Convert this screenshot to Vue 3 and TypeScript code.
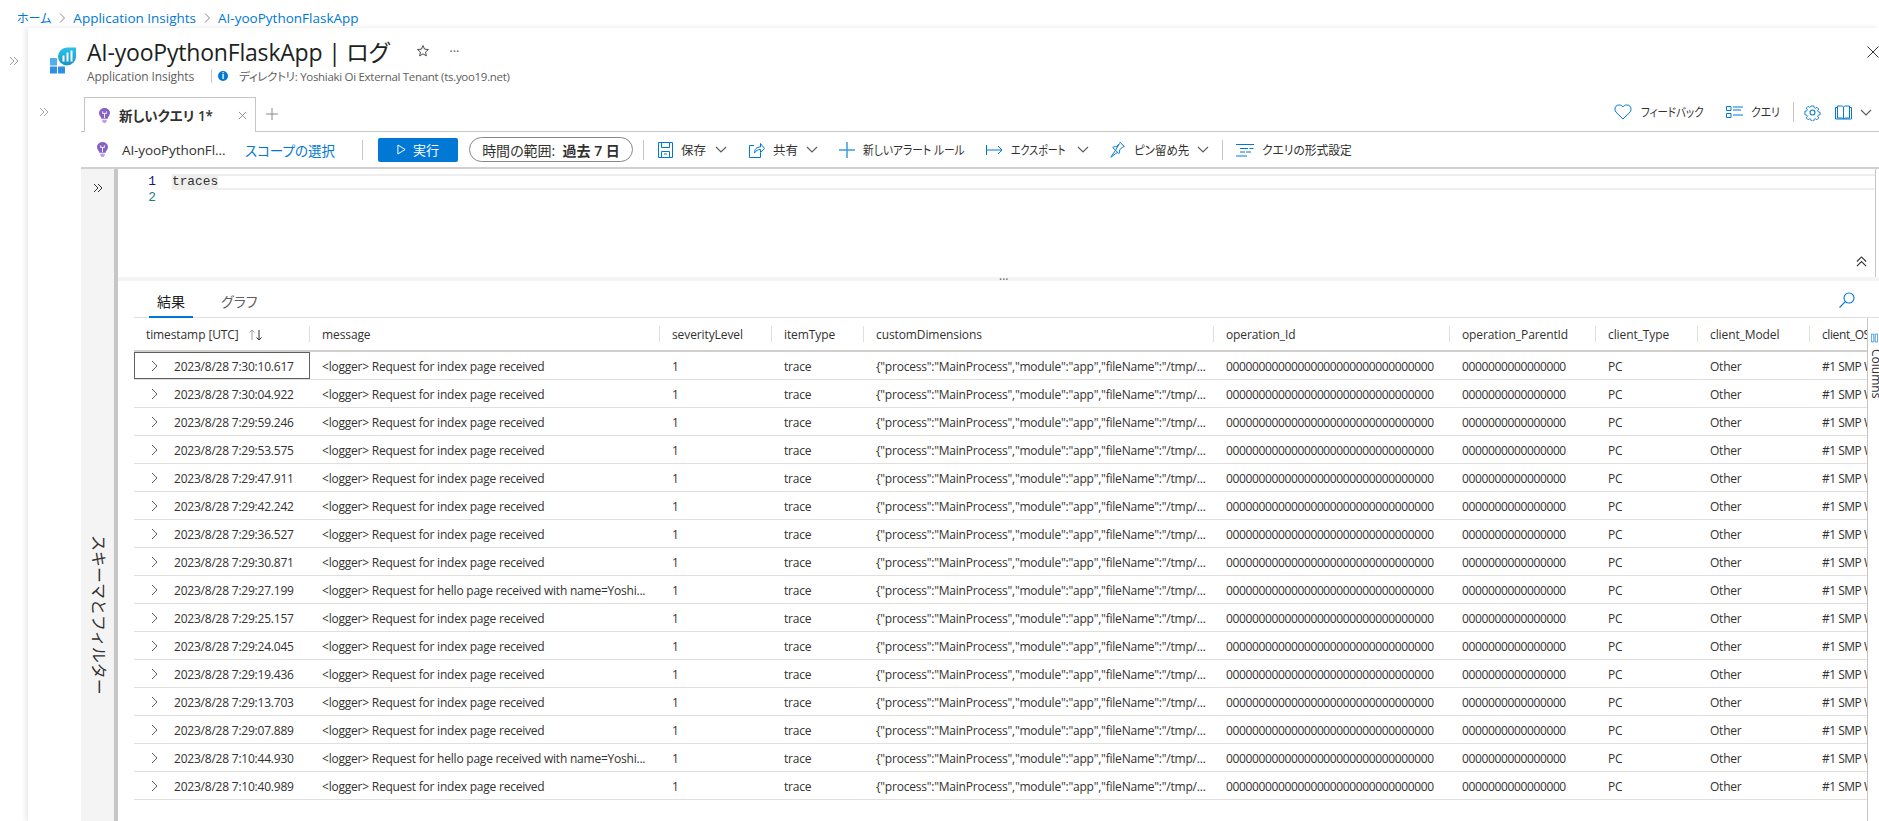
<script setup lang="ts">
const columns = [
  { key: 'timestamp', width: 176 },
  { key: 'message', width: 350 },
  { key: 'severityLevel', width: 112 },
  { key: 'itemType', width: 92 },
  { key: 'customDimensions', width: 350 },
  { key: 'operation_Id', width: 236 },
  { key: 'operation_ParentId', width: 146 },
  { key: 'client_Type', width: 102 },
  { key: 'client_Model', width: 112 },
  { key: 'client_OS', width: 60 }
]
const hello = '<logger> Request for hello page received with name=Yoshi...'
const index = '<logger> Request for index page received'
const rows: [string, string][] = [
  ['2023/8/28 7:30:10.617', index],
  ['2023/8/28 7:30:04.922', index],
  ['2023/8/28 7:29:59.246', index],
  ['2023/8/28 7:29:53.575', index],
  ['2023/8/28 7:29:47.911', index],
  ['2023/8/28 7:29:42.242', index],
  ['2023/8/28 7:29:36.527', index],
  ['2023/8/28 7:29:30.871', index],
  ['2023/8/28 7:29:27.199', hello],
  ['2023/8/28 7:29:25.157', index],
  ['2023/8/28 7:29:24.045', index],
  ['2023/8/28 7:29:19.436', index],
  ['2023/8/28 7:29:13.703', index],
  ['2023/8/28 7:29:07.889', index],
  ['2023/8/28 7:10:44.930', hello],
  ['2023/8/28 7:10:40.989', index]
]
const dims = '{"process":"MainProcess","module":"app","fileName":"/tmp/...'
const zeros = '00000000000000000000000000000000'
</script>

<template>
  <div class="page">
    <nav class="crumbs">
      <a class="home">ホーム</a>
      <svg class="crumb-sep" viewBox="0 0 8 12"><path d="M2 1.5 6.5 6 2 10.5" /></svg>
      <a>Application Insights</a>
      <svg class="crumb-sep" viewBox="0 0 8 12"><path d="M2 1.5 6.5 6 2 10.5" /></svg>
      <a>AI-yooPythonFlaskApp</a>
    </nav>
    <div class="shell">
      <aside class="rail">
        <svg class="dbl" viewBox="0 0 12 12"><path d="M2 2l4 4-4 4M6 2l4 4-4 4" /></svg>
      </aside>
      <main class="blade">
        <header class="blade-head">
          <svg class="logo" viewBox="0 0 26 27">
            <defs>
              <linearGradient id="lg-bubble" x1="0" y1="0" x2="0" y2="1"><stop offset="0" stop-color="#29c3e6" /><stop offset="1" stop-color="#1b93c9" /></linearGradient>
            </defs>
            <path d="M17 .5h9v9a9 9 0 0 1-18 0 9 9 0 0 1 9-9z" fill="url(#lg-bubble)" />
            <path d="M13 9h2v6h-2zM17 6h2v9h-2zM21 4h2v11h-2z" fill="#fff" transform="translate(-.5 -.5)" />
            <rect x="0" y="11" width="7" height="7.500" rx=".6" fill="#50aef0" />
            <rect x="0" y="19.500" width="7" height="7" rx=".6" fill="#2f8fe6" />
            <rect x="8" y="19.500" width="7" height="7" rx=".6" fill="#2f8fe6" />
          </svg>
          <div class="titles">
            <div class="title-row">
              <h1>AI-yooPythonFlaskApp | <span class="h-jp">ログ</span></h1>
              <svg class="star" viewBox="0 0 16 16"><path d="M8 1.800l1.800 4.100 4.400.4-3.300 2.900 1 4.300L8 11.300l-3.900 2.200 1-4.300-3.300-2.900 4.400-.4z" /></svg>
              <span class="more">···</span>
            </div>
            <div class="sub-row">
              <span class="sub-name">Application Insights</span>
              <span class="sub-bar"></span>
              <span class="info">i</span>
              <span>ディレクトリ: Yoshiaki Oi External Tenant (ts.yoo19.net)</span>
            </div>
          </div>
          <svg class="close" viewBox="0 0 12 12"><path d="M0.500 0.500 11.500 11.500M11.500 0.500 0.500 11.500" /></svg>
        </header>

        <div class="workspace">
          <aside class="rail2">
            <svg class="dbl" viewBox="0 0 12 12"><path d="M2 2l4 4-4 4M6 2l4 4-4 4" /></svg>
          </aside>
          <section class="content">
            <div class="tabbar">
              <div class="tab">
                <svg class="bulb" viewBox="0 0 12 18" preserveAspectRatio="none"><path d="M6 0a6 6 0 0 1 6 6c0 2.400-1.400 3.500-2.200 5.400-.2.500-.2 1-.3 1.600h-7c-.1-.6-.1-1.100-.3-1.600C1.400 9.500 0 8.400 0 6a6 6 0 0 1 6-6z" fill="#8661c5" /><path d="M3.500 14h5v1.500L7 18H5l-1.500-2.500z" fill="#b9a0e8" /><path d="M3.700 6.500h4.600M6 6.500V12M4 4v2.500M8 4v2.500" stroke="#fff" stroke-width="1" fill="none" /></svg>
                <span class="tab-name">新しいクエリ 1*</span>
                <svg class="tab-x" viewBox="0 0 10 10"><path d="M1 1l8 8M9 1l-8 8" /></svg>
              </div>
              <svg class="tab-plus" viewBox="0 0 12 12"><path d="M6 0v12M0 6h12" /></svg>
              <div class="spacer"></div>
              <div class="top-actions">
                <svg class="ic heart" viewBox="0 0 18 16"><path d="M9 15 2 8.200A4.300 4.300 0 0 1 1 5.200 4.300 4.300 0 0 1 5.300 1C6.900 1 8.200 1.800 9 3c.8-1.200 2.100-2 3.700-2A4.300 4.300 0 0 1 17 5.200c0 1.200-.4 2.200-1 3z" /></svg>
                <span class="ta-l1 cond">フィードバック</span>
                <svg class="ic qlist" viewBox="0 0 17 14"><path d="M.5 1.500h4.500v4H.5zM.5 8.500h4.500v4H.5zM7 2h10M7 5h8M7 10h10" /></svg>
                <span class="ta-l2 cond">クエリ</span>
                <span class="vsep tall"></span>
                <svg class="ic gear" viewBox="0 0 16 16"><circle cx="8" cy="8" r="2.300" /><path d="M6.600 .7h2.800l.4 2 1.400.6 1.700-1.100 2 2-1.100 1.700.6 1.400 2 .4v2.800l-2 .4-.6 1.400 1.100 1.700-2 2-1.700-1.100-1.400.6-.4 2H6.600l-.4-2-1.400-.6-1.700 1.100-2-2 1.100-1.700-.6-1.400-2-.4V6.600l2-.4.6-1.400-1.100-1.700 2-2 1.700 1.100 1.400-.6z" transform="translate(1.200 1.200) scale(.85)" /></svg>
                <svg class="ic book" viewBox="0 0 17 15"><path d="M.5 2.500h2V13h5l1 1 1-1h5V2.500h2V14H.5zM2.500 1h4c1 0 2 .5 2 1.500V13M14.500 1h-4c-1 0-2 .5-2 1.500V13M14.500 1v12M2.500 1v12" /></svg>
                <svg class="chev" viewBox="0 0 12 7"><path d="M1 1l5 5 5-5" /></svg>
              </div>
            </div>

            <div class="toolbar">
              <svg class="bulb small" viewBox="0 0 12 18" preserveAspectRatio="none"><path d="M6 0a6 6 0 0 1 6 6c0 2.400-1.400 3.500-2.200 5.400-.2.500-.2 1-.3 1.600h-7c-.1-.6-.1-1.100-.3-1.600C1.400 9.500 0 8.400 0 6a6 6 0 0 1 6-6z" fill="#8661c5" /><path d="M3.500 14h5v1.500L7 18H5l-1.500-2.500z" fill="#b9a0e8" /><path d="M3.700 6.500h4.600M6 6.500V12M4 4v2.500M8 4v2.500" stroke="#fff" stroke-width="1" fill="none" /></svg>
              <span class="scope-name">AI-yooPythonFl...</span>
              <a class="scope-link">スコープの選択</a>
              <span class="vsep s1"></span>
              <button class="run">
                <svg viewBox="0 0 10 12"><path d="M1 1l8 5-8 5z" /></svg>
                <span>実行</span>
              </button>
              <div class="pill">時間の範囲:&nbsp;&nbsp;<b>過去 7 日</b></div>
              <span class="vsep s2"></span>
              <svg class="ic save" viewBox="0 0 15 16"><path d="M.5.500h14v15H.5zM3.500.500v5h8v-5M3.500 15.500v-6h8v6M6 12h3" /></svg>
              <span class="t t-save">保存</span>
              <svg class="chev c1" viewBox="0 0 12 7"><path d="M1 1l5 5 5-5" /></svg>
              <svg class="ic share" viewBox="0 0 16 16"><path d="M5 3.500H.500v12h11V11M5.500 11c0-4 2-6 6-6V1.500l4 5-4 4V7.500c-2.500 0-4.500 1-6 3.500z" /></svg>
              <span class="t t-share">共有</span>
              <svg class="chev c2" viewBox="0 0 12 7"><path d="M1 1l5 5 5-5" /></svg>
              <svg class="ic plus" viewBox="0 0 16 16"><path d="M8 0v16M0 8h16" /></svg>
              <span class="t t-alert cond">新しいアラート ルール</span>
              <svg class="ic arrow" viewBox="0 0 17 10"><path d="M.5 0v10M1 5h15M12 1l4 4-4 4" /></svg>
              <span class="t t-export cond">エクスポート</span>
              <svg class="chev c3" viewBox="0 0 12 7"><path d="M1 1l5 5 5-5" /></svg>
              <svg class="ic pin" viewBox="0 0 15 17"><path d="M9.500 .8l4.700 4.700-1.500 .4-3.200 3.200c.4 1.400.1 2.600-.7 3.500L5.500 9.300 .8 16.200l6.700-4.800M5.500 9.300 2.700 6.500c.9-.8 2.100-1.100 3.500-.7l3.200-3.200z" /></svg>
              <span class="t t-pin cond">ピン留め先</span>
              <svg class="chev c4" viewBox="0 0 12 7"><path d="M1 1l5 5 5-5" /></svg>
              <span class="vsep s3"></span>
              <svg class="ic fmt" viewBox="0 0 18 14"><path d="M0 1.500h18M4 5.500h8M13.500 5.500h4M4 9h5M10 9h5M0 13h11" /></svg>
              <span class="t t-fmt cond">クエリの形式設定</span>
            </div>

            <div class="split">
              <aside class="schema">
                <svg class="dbl strong" viewBox="0 0 12 12"><path d="M2 2l4 4-4 4M6 2l4 4-4 4" /></svg>
                <span class="schema-label">スキーマとフィルター</span>
              </aside>
              <div class="divider"></div>
              <div class="work">
                <div class="editor">
                  <div class="gutter">
                    <span class="ln active">1</span>
                    <span class="ln">2</span>
                  </div>
                  <div class="code">
                    <div class="line current"><span class="tok">traces</span></div>
                  </div>
                  <svg class="collapse" viewBox="0 0 12 12"><path d="M1 6l5-5 5 5M1 11l5-5 5 5" /></svg>
                </div>
                <div class="grip">
                  <span class="dots">···</span>
                </div>
                <div class="results">
                  <div class="res-tabs">
                    <span class="rt active">結果</span>
                    <span class="rt">グラフ</span>
                    <svg class="search" viewBox="0 0 16 16"><circle cx="10" cy="6" r="5" /><path d="M6.300 9.700.5 15.500" /></svg>
                  </div>
                  <div class="grid-wrap">
                    <div class="grid">
                      <div class="hdr">
                        <div v-for="c in columns" :key="c.key" class="hc" :style="{ width: c.width + 'px' }">
                          <span v-if="c.key === 'timestamp'">timestamp [UTC]</span>
                          <span v-else>{{ c.key }}</span>
                          <svg v-if="c.key === 'timestamp'" class="sort" viewBox="0 0 16 12"><path class="up" d="M4 11V1M1.500 3.500 4 1l2.500 2.500" /><path d="M11 1v10M8.500 8.500 11 11l2.500-2.500" /></svg>
                        </div>
                      </div>
                      <div v-for="(r, i) in rows" :key="i" class="row">
                        <div class="c first" :class="{ focus: i === 0 }" :style="{ width: columns[0].width + 'px' }">
                          <svg class="expand" viewBox="0 0 7 12"><path d="M1 1l5 5-5 5" /></svg>
                          <span>{{ r[0] }}</span>
                        </div>
                        <div class="c" :style="{ width: columns[1].width + 'px' }">{{ r[1] }}</div>
                        <div class="c" :style="{ width: columns[2].width + 'px' }">1</div>
                        <div class="c" :style="{ width: columns[3].width + 'px' }">trace</div>
                        <div class="c" :style="{ width: columns[4].width + 'px' }">{{ dims }}</div>
                        <div class="c num" :style="{ width: columns[5].width + 'px' }">{{ zeros }}</div>
                        <div class="c num" :style="{ width: columns[6].width + 'px' }">0000000000000000</div>
                        <div class="c" :style="{ width: columns[7].width + 'px' }">PC</div>
                        <div class="c" :style="{ width: columns[8].width + 'px' }">Other</div>
                        <div class="c" :style="{ width: columns[9].width + 'px' }">#1 SMP Wed</div>
                      </div>
                    </div>
                    <aside class="col-panel">
                      <svg viewBox="0 0 10 12"><path d="M.5.500h3.500v11H.5zM6 .500h3.500v11H6z" /></svg>
                      <span>Columns</span>
                    </aside>
                  </div>
                </div>
              </div>
            </div>
          </section>
        </div>
      </main>
    </div>
  </div>
</template>

<style>
html, body { margin: 0; padding: 0; background: #fff; overflow: hidden; }
</style>

<style scoped>
.page {
  width: 1879px; height: 821px; overflow: hidden; background: #fff; color: #323130;
  font-family: "Open Sans", "Noto Sans CJK JP", sans-serif; font-size: 12px;
  font-feature-settings: "palt";
  display: flex; flex-direction: column;
}
svg { display: block; flex: none; fill: none; }
.cond { transform-origin: left center; white-space: nowrap; }
.crumbs { height: 28px; flex: none; display: flex; align-items: center; padding: 8px 0 0 17px; box-sizing: border-box; font-size: 13.500px; color: #0078d4; }
.home { font-size: 12px; }
.crumb-sep { width: 8px; height: 12px; margin: 0 7px 0 7px; stroke: #8a8886; stroke-width: 1; }
.shell { flex: 1; display: flex; min-height: 0; }
.rail { width: 28px; flex: none; padding-top: 27px; padding-left: 8px; box-sizing: border-box; }
.dbl { width: 12px; height: 12px; stroke: #a19f9d; stroke-width: 1; }
.dbl.strong { stroke: #323130; }
.blade { flex: 1; min-width: 0; display: flex; flex-direction: column; box-shadow: -2px 0 5px rgba(0,0,0,.1); }
.blade-head { height: 69px; flex: none; display: flex; position: relative; padding: 0 0 0 22px; box-sizing: border-box; }
.logo { width: 26px; height: 27px; margin-top: 19px; }
.titles { margin-left: 11px; padding-top: 7px; }
.title-row { display: flex; align-items: center; height: 32px; }
h1 { margin: 0; font-size: 23px; font-weight: 500; color: #201f1e; letter-spacing: -.2px; white-space: nowrap; }
.h-jp { font-weight: 400; }
.star { width: 14px; height: 14px; margin-left: 27px; stroke: #323130; stroke-width: 1; }
.more { margin-left: 19px; font-size: 13px; color: #605e5c; line-height: 1; }
.sub-row { display: flex; align-items: center; margin-top: -1px; height: 20px; font-size: 11.500px; color: #605e5c; letter-spacing: -.3px; white-space: nowrap; }
.sub-name { width: 124px; font-size: 12px; letter-spacing: -.1px; }
.sub-bar { width: 1px; height: 14px; background: #c8c6c4; margin-right: 6px; }
.info { width: 10px; height: 10px; border-radius: 50%; background: #0078d4; color: #fff; font-size: 8px; font-weight: 700; line-height: 10px; text-align: center; margin-right: 11px; letter-spacing: 0; }
.close { position: absolute; right: 0; top: 18px; width: 12px; height: 12px; stroke: #323130; stroke-width: 1; }
.workspace { flex: 1; display: flex; min-height: 0; }
.rail2 { width: 53px; flex: none; padding: 9px 0 0 10px; box-sizing: border-box; }
.content { flex: 1; min-width: 0; display: flex; flex-direction: column; }
.tabbar { height: 35px; flex: none; display: flex; border-bottom: 1px solid #c8c6c4; box-sizing: border-box; align-items: stretch; }
.tab { margin-left: 3px; width: 172px; height: 35px; box-sizing: border-box; border: 1px solid #c8c6c4; border-bottom: none; background: #fff; display: flex; align-items: center; padding-left: 14px; }
.bulb { width: 11px; height: 15px; }
.bulb.small { margin-left: 16px; }
.tab-name { margin-left: 9px; font-size: 13.500px; font-weight: 600; color: #323130; white-space: nowrap; }
.tab-x { width: 9px; height: 9px; margin-left: auto; margin-right: 8px; stroke: #8a8886; stroke-width: 1; }
.tab-plus { width: 12px; height: 12px; margin: 11px 0 0 10px; stroke: #8a8886; stroke-width: 1; }
.spacer { flex: 1; }
.top-actions { display: flex; align-items: center; padding: 0 7px 4px 0; }
.top-actions span { white-space: nowrap; }
.ic { stroke: #0078d4; stroke-width: 1; }
.heart { width: 18px; height: 16px; }
.ta-l1 { margin-left: 9px; width: 62px; transform: scaleX(.87); }
.qlist { width: 17px; height: 14px; margin-left: 23px; }
.ta-l2 { margin-left: 8px; width: 28px; transform: scaleX(.9); }
.vsep { display: block; width: 1px; background: #c8c6c4; flex: none; height: 20px; }
.tall { margin-left: 14px; }
.gear { width: 17px; height: 17px; margin-left: 10px; }
.book { width: 17px; height: 15px; margin-left: 14px; }
.chev { width: 12px; height: 7px; stroke: #605e5c; stroke-width: 1.200; }
.top-actions .chev { margin-left: 8px; }
.toolbar { height: 35px; flex: none; display: flex; align-items: center; border-bottom: 2px solid #d2d0ce; box-sizing: content-box; white-space: nowrap; }
.scope-name { margin-left: 14px; width: 123px; font-size: 13.500px; letter-spacing: -.1px; }
.scope-link { color: #0078d4; font-size: 13.500px; width: 91px; }
.s1 { margin-left: 26px; }
.run { margin-left: 15px; width: 80px; height: 24px; border: 0; border-radius: 2px; background: #0078d4; color: #fff; display: flex; align-items: center; justify-content: center; gap: 7px; font: inherit; font-size: 13px; padding: 0; }
.run svg { width: 9px; height: 11px; stroke: #fff; stroke-width: 1.100; }
.pill { margin-left: 11px; width: 164px; height: 25px; box-sizing: border-box; border: 1px solid #8a8886; border-radius: 13px; display: flex; align-items: center; justify-content: center; font-size: 14px; }
.pill b { font-weight: 600; }
.s2 { margin-left: 10px; }
.t { font-size: 12.500px; }
.save { width: 15px; height: 16px; margin-left: 14px; }
.t-save { margin-left: 8px; width: 26px; }
.c1 { margin-left: 8px; }
.share { width: 16px; height: 16px; margin-left: 22px; }
.t-share { margin-left: 8px; width: 24px; }
.c2 { margin-left: 9px; }
.plus { width: 16px; height: 16px; margin-left: 21px; stroke: #3f9ae0; stroke-width: 1.500; }
.t-alert { margin-left: 8px; width: 103px; transform: scaleX(.86); }
.arrow { width: 17px; height: 10px; margin-left: 20px; }
.t-export { margin-left: 8px; width: 58px; transform: scaleX(.8); }
.c3 { margin-left: 8px; }
.pin { width: 15px; height: 17px; margin-left: 21px; }
.t-pin { margin-left: 9px; width: 55px; transform: scaleX(.92); }
.c4 { margin-left: 8px; }
.s3 { margin-left: 13px; }
.fmt { width: 18px; height: 14px; margin-left: 13px; }
.t-fmt { margin-left: 8px; transform: scaleX(.94); }
.split { flex: 1; min-height: 0; display: flex; }
.schema { width: 33px; flex: none; background: #f4f4f4; display: flex; flex-direction: column; align-items: center; padding-top: 13px; box-sizing: border-box; }
.schema-label { writing-mode: vertical-rl; text-orientation: sideways; margin: 341px 0 0 5px; font-size: 16px; font-feature-settings: normal; white-space: nowrap; color: #323130; }
.divider { width: 4px; flex: none; background: #c8c6c4; }
.work { flex: 1; min-width: 0; display: flex; flex-direction: column; }
.editor { height: 108px; flex: none; display: flex; position: relative; border-right: 1px solid #c8c6c4; box-sizing: border-box; margin-right: 3px; padding-top: 5px; }
.gutter { width: 54px; flex: none; display: flex; flex-direction: column; padding-right: 16px; box-sizing: border-box; align-items: flex-end; font-family: "Liberation Mono", monospace; font-size: 12.800px; color: #237893; }
.ln { height: 16px; line-height: 16px; display: block; }
.ln.active { color: #0b216f; }
.code { flex: 1; }
.line.current { height: 16px; border-top: 2px solid #eee; border-bottom: 2px solid #eee; box-sizing: border-box; display: flex; align-items: center; }
.tok { background: #eee; color: #323130; font-family: "Liberation Mono", monospace; font-size: 12.800px; line-height: 12px; }
.collapse { position: absolute; right: 8px; bottom: 10px; width: 11px; height: 11px; stroke: #323130; stroke-width: 1.200; }
.grip { height: 4px; flex: none; background: #f4f4f4; position: relative; }
.dots { position: absolute; left: 881px; top: -3px; font-size: 12px; line-height: 12px; color: #605e5c; }
.results { flex: 1; min-height: 0; display: flex; flex-direction: column; padding-left: 16px; }
.res-tabs { height: 37px; flex: none; display: flex; position: relative; border-bottom: 1px solid #e1dfdd; box-sizing: border-box; padding-left: 15px; }
.rt { display: block; font-size: 14px; line-height: 18px; margin-top: 12px; height: 25px; box-sizing: border-box; white-space: nowrap; color: #605e5c; }
.rt.active { padding: 0 8px; width: 44px; border-bottom: 2px solid #0078d4; color: #201f1e; }
.rt:nth-child(2) { margin-left: 28px; }
.search { position: absolute; right: 24px; top: 11px; width: 16px; height: 16px; stroke: #0078d4; stroke-width: 1.100; }
.grid-wrap { flex: 1; min-height: 0; display: flex; position: relative; overflow: hidden; }
.grid { flex: 1; min-width: 0; overflow: hidden; }
.hdr { height: 34px; display: flex; border-bottom: 2px solid #d2d0ce; box-sizing: border-box; width: 1800px; }
.hc { flex: none; display: flex; align-items: center; padding: 1px 0 0 12px; box-sizing: border-box; position: relative; color: #323130; font-size: 12px; font-weight: 500; white-space: nowrap; letter-spacing: -.1px; }
.hc:last-child { letter-spacing: -.4px; }
.hc::after { content: ""; position: absolute; right: 0; top: 8px; height: 16px; width: 1px; background: #e1dfdd; }
.sort { width: 16px; height: 12px; margin-left: 9px; stroke: #323130; stroke-width: 1; }
.sort .up { stroke: #a19f9d; }
.row { height: 28px; display: flex; border-bottom: 1px solid #e1dfdd; box-sizing: border-box; width: 1800px; }
.c { flex: none; box-sizing: border-box; padding: 1px 0 0 12px; display: flex; align-items: center; white-space: nowrap; overflow: hidden; font-size: 12px; letter-spacing: -.22px; color: #323130; }
.c:last-child { letter-spacing: -.5px; }
.c.num { letter-spacing: -.37px; }
.c.first { padding: 1px 0 0 17px; height: 27px; }
.c.focus { outline: 1px solid #605e5c; outline-offset: -1px; }
.expand { width: 7px; height: 12px; margin-right: 16px; stroke: #605e5c; stroke-width: 1; }
.col-panel { position: absolute; right: 0; top: 0; bottom: 0; width: 11px; background: #fff; border-left: 1px solid #c8c6c4; overflow: hidden; }
.col-panel svg { width: 7px; height: 10px; stroke: #0078d4; stroke-width: 1; margin: 15px 0 0 3px; }
.col-panel span { position: absolute; left: 1px; top: 31px; writing-mode: vertical-rl; font-size: 12px; line-height: 14px; }
</style>
